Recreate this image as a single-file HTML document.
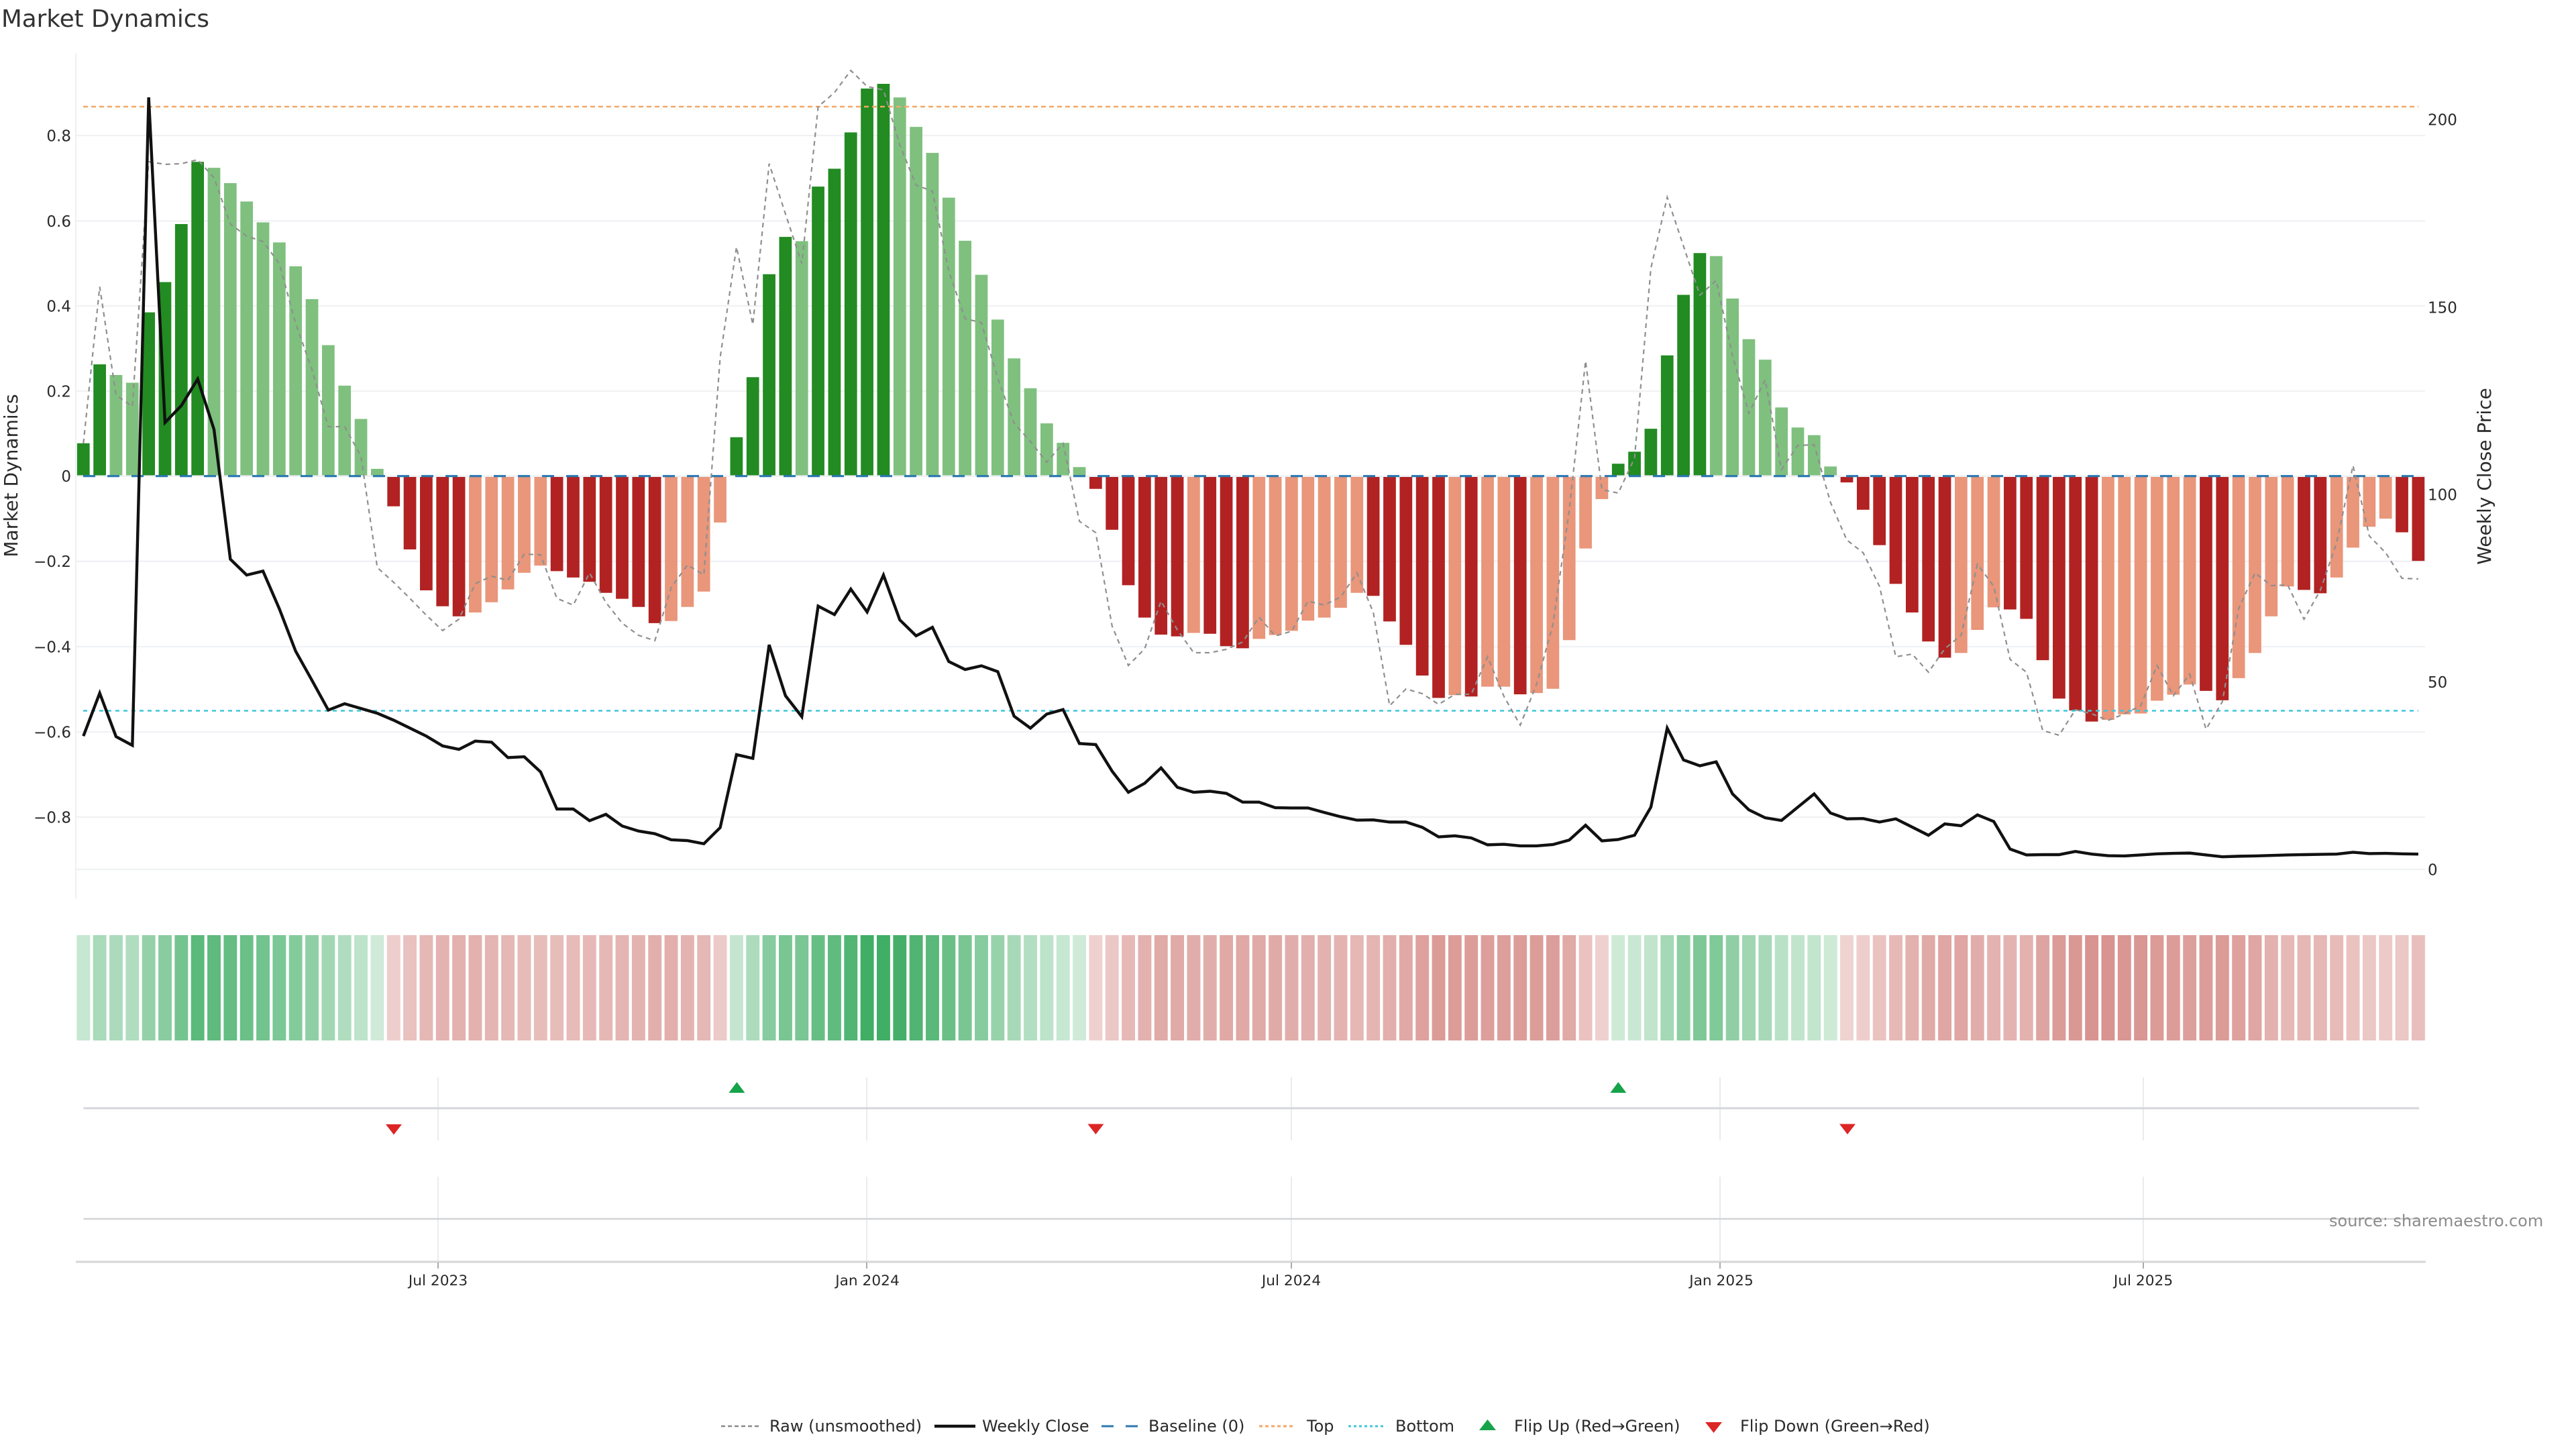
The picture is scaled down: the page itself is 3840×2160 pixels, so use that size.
<!DOCTYPE html>
<html lang="en">
<head>
<meta charset="utf-8">
<title>Market Dynamics</title>
<style>
html,body{margin:0;padding:0;background:#fff;width:3840px;height:2160px;overflow:hidden}
svg{display:block}
text{font-family:"DejaVu Sans","Liberation Sans",sans-serif;fill:#2a2a2a}
.t{font-size:23px}
.h rect{width:.8175px;height:1px}
</style>
</head>
<body>
<svg width="3840" height="2160" viewBox="0 0 3840 2160" xmlns="http://www.w3.org/2000/svg">
<rect width="3840" height="2160" fill="#fff"/>
<text x="2" y="40" font-size="35.7" style="fill:#333">Market Dynamics</text>

<!-- axis + grid -->
<path d="M113 80V1340" stroke="#eef0f3" stroke-width="2" fill="none"/>
<path d="M114 202H3615M114 329.5H3615M114 456H3615M114 583H3615M114 836.8H3615M114 964H3615M114 1091H3615M114 1218H3615M114 1296H3615" stroke="#f0f2f5" stroke-width="2.5" fill="none"/>

<!-- bars -->
<g transform="translate(114.9 709) scale(24.34 -635.5)">
<path fill="#228b22" d="M0 0h.77V.076H0zM1 0h.77V.261H1zM4 0h.77V.383H4zM5 0h.77V.454H5zM6 0h.77V.59H6zM7 0h.77V.736H7zM40 0h.77V.09H40zM41 0h.77V.231H41zM42 0h.77V.4725H42zM43 0h.77V.56H43zM45 0h.77V.678H45zM46 0h.77V.72H46zM47 0h.77V.805H47zM48 0h.77V.908H48zM49 0h.77V.919H49zM94 0h.77V.028H94zM95 0h.77V.056H95zM96 0h.77V.11H96zM97 0h.77V.282H97zM98 0h.77V.424H98zM99 0h.77V.522H99z"/>
<path fill="#7fc07f" d="M2 0h.77V.236H2zM3 0h.77V.218H3zM8 0h.77V.722H8zM9 0h.77V.686H9zM10 0h.77V.643H10zM11 0h.77V.594H11zM12 0h.77V.547H12zM13 0h.77V.491H13zM14 0h.77V.414H14zM15 0h.77V.306H15zM16 0h.77V.211H16zM17 0h.77V.133H17zM18 0h.77V.016H18zM44 0h.77V.55H44zM50 0h.77V.887H50zM51 0h.77V.818H51zM52 0h.77V.757H52zM53 0h.77V.652H53zM54 0h.77V.551H54zM55 0h.77V.471H55zM56 0h.77V.366H56zM57 0h.77V.275H57zM58 0h.77V.205H58zM59 0h.77V.1225H59zM60 0h.77V.077H60zM61 0h.77V.02H61zM100 0h.77V.515H100zM101 0h.77V.4155H101zM102 0h.77V.32H102zM103 0h.77V.272H103zM104 0h.77V.16H104zM105 0h.77V.113H105zM106 0h.77V.095H106zM107 0h.77V.0215H107z"/>
<path fill="#b22222" d="M19 0h.77V-.072H19zM20 0h.77V-.173H20zM21 0h.77V-.269H21zM22 0h.77V-.3065H22zM23 0h.77V-.33H23zM29 0h.77V-.224H29zM30 0h.77V-.239H30zM31 0h.77V-.249H31zM32 0h.77V-.275H32zM33 0h.77V-.289H33zM34 0h.77V-.308H34zM35 0h.77V-.346H35zM62 0h.77V-.031H62zM63 0h.77V-.127H63zM64 0h.77V-.257H64zM65 0h.77V-.333H65zM66 0h.77V-.373H66zM67 0h.77V-.377H67zM69 0h.77V-.371H69zM70 0h.77V-.4H70zM71 0h.77V-.405H71zM79 0h.77V-.282H79zM80 0h.77V-.342H80zM81 0h.77V-.397H81zM82 0h.77V-.469H82zM83 0h.77V-.5215H83zM85 0h.77V-.518H85zM88 0h.77V-.513H88zM108 0h.77V-.016H108zM109 0h.77V-.08H109zM110 0h.77V-.163H110zM111 0h.77V-.254H111zM112 0h.77V-.321H112zM113 0h.77V-.389H113zM114 0h.77V-.427H114zM118 0h.77V-.314H118zM119 0h.77V-.336H119zM120 0h.77V-.433H120zM121 0h.77V-.523H121zM122 0h.77V-.551H122zM123 0h.77V-.577H123zM130 0h.77V-.505H130zM131 0h.77V-.527H131zM136 0h.77V-.268H136zM137 0h.77V-.276H137zM142 0h.77V-.133H142zM143 0h.77V-.2H143z"/>
<path fill="#e9967a" d="M24 0h.77V-.321H24zM25 0h.77V-.297H25zM26 0h.77V-.267H26zM27 0h.77V-.228H27zM28 0h.77V-.211H28zM36 0h.77V-.341H36zM37 0h.77V-.308H37zM38 0h.77V-.272H38zM39 0h.77V-.11H39zM68 0h.77V-.369H68zM72 0h.77V-.383H72zM73 0h.77V-.374H73zM74 0h.77V-.364H74zM75 0h.77V-.34H75zM76 0h.77V-.333H76zM77 0h.77V-.31H77zM78 0h.77V-.275H78zM84 0h.77V-.515H84zM86 0h.77V-.495H86zM87 0h.77V-.495H87zM89 0h.77V-.51H89zM90 0h.77V-.5H90zM91 0h.77V-.386H91zM92 0h.77V-.171H92zM93 0h.77V-.055H93zM115 0h.77V-.416H115zM116 0h.77V-.362H116zM117 0h.77V-.309H117zM124 0h.77V-.573H124zM125 0h.77V-.56H125zM126 0h.77V-.558H126zM127 0h.77V-.528H127zM128 0h.77V-.514H128zM129 0h.77V-.49H129zM132 0h.77V-.475H132zM133 0h.77V-.416H133zM134 0h.77V-.33H134zM135 0h.77V-.26H135zM138 0h.77V-.239H138zM139 0h.77V-.169H139zM140 0h.77V-.12H140zM141 0h.77V-.101H141z"/>
</g>
<path d="M114 709.7H3615" stroke="#eef0f4" stroke-width="2.5" fill="none"/>
<path d="M124 709.7H3605" stroke="#2a78b0" stroke-width="3.2" stroke-dasharray="18 18" fill="none"/>

<!-- threshold lines -->
<path d="M124 159H3605" stroke="#f4a765" stroke-width="2.5" stroke-dasharray="7 5" fill="none"/>
<path d="M124 1059.5H3605" stroke="#3fc6d8" stroke-width="2.6" stroke-dasharray="6 6" fill="none"/>

<!-- raw line -->
<g transform="translate(124.3 0) scale(24.34 1)">
<polyline fill="none" stroke="#8f8f8f" stroke-width="2.2" stroke-dasharray="7 6" vector-effect="non-scaling-stroke" points="0,661 1,427.5 2,589 3,606 4,241 5,245 6,244 7,238 8,265 9,334 10,352 11,360 12,393 13,482 14,551 15,636 16,636 17,680 18,846 19,868 20,892 21,917 22,940 23,923 24,870 25,859 26,865 27,826 28,827 29,892 30,902 31,854 32,898 33,929 34,947 35,955 36,876 37,842 38,857 39,533 40,368 41,484 42,244 43,319 44,393 45,159 46,138 47,105 48,129 49,134 50,216 51,276 52,285 53,404 54,475 55,481 56,564 57,631 58,658 59,689 60,661 61,777 62,794 63,933 64,992 65,967 66,896 67,939 68,973 69,973 70,968 71,957 72,920 73,948 74,941 75,896 76,902 77,890 78,854 79,913 80,1052 81,1027 82,1034 83,1050 84,1035 85,1035 86,979 87,1038 88,1081 89,1020 90,931 91,761 92,538 93,730 94,735 95,683 96,400 97,294 98,367 99,440 100,418 101,530 102,616 103,566 104,700 105,664 106,663 107,749 108,805 109,824 110,874 111,979 112,975 113,1002 114,967 115,947 116,841 117,874 118,983 119,1002 120,1089 121,1096 122,1058 123,1064 124,1074 125,1064 126,1052 127,992 128,1037 129,1005 130,1087 131,1046 132,907 133,854 134,873 135,872 136,923 137,880 138,809 139,694 140,799 141,824 142,862 143,863"/>
</g>

<!-- weekly close -->
<g transform="translate(124.3 690) scale(24.34 .3954)">
<polyline fill="none" stroke="#111" stroke-width="4.4" vector-effect="non-scaling-stroke" points="0,1030 1,868 2,1032 3,1065 4,-1378 5,-152 6,-216 7,-316 8,-126 9,363 10,423 11,408 12,550 13,710 14,820 15,932 16,908 17,926 18,944 19,970 20,1000 21,1030 22,1067 23,1080 24,1049 25,1053 26,1111 27,1108 28,1165 29,1305 30,1305 31,1349 32,1325 33,1369 34,1388 35,1398 36,1421 37,1424 38,1436 39,1375 40,1100 41,1114 42,686 43,878 44,957 45,540 46,572 47,476 48,562 49,423 50,592 51,652 52,620 53,749 54,779 55,765 56,787 57,955 58,1000 59,947 60,930 61,1058 62,1062 63,1162 64,1242 65,1208 66,1150 67,1223 68,1242 69,1238 70,1246 71,1279 72,1279 73,1300 74,1301 75,1301 76,1318 77,1334 78,1347 79,1346 80,1354 81,1354 82,1374 83,1410 84,1406 85,1414 86,1440 87,1438 88,1444 89,1444 90,1439 91,1422 92,1366 93,1425 94,1420 95,1404 96,1298 97,1000 98,1120 99,1142 100,1127 101,1248 102,1308 103,1338 104,1348 105,1298 106,1248 107,1320 108,1342 109,1341 110,1354 111,1342 112,1373 113,1404 114,1361 115,1368 116,1327 117,1352 118,1456 119,1478 120,1477 121,1477 122,1465 123,1475 124,1481 125,1482 126,1478 127,1474 128,1472 129,1471 130,1478 131,1485 132,1483 133,1482 134,1480 135,1478 136,1477 137,1476 138,1475 139,1468 140,1473 141,1472 142,1474 143,1475"/>
</g>

<!-- axis labels -->
<g class="t" text-anchor="end">
<text x="106" y="210.4">0.8</text>
<text x="106" y="337.8">0.6</text>
<text x="106" y="464.4">0.4</text>
<text x="106" y="591.4">0.2</text>
<text x="106" y="718">0</text>
<text x="106" y="845.2">−0.2</text>
<text x="106" y="972.4">−0.4</text>
<text x="106" y="1099.4">−0.6</text>
<text x="106" y="1226.4">−0.8</text>
</g>
<g class="t">
<text x="3619" y="186.4">200</text>
<text x="3619" y="466.6">150</text>
<text x="3619" y="745.4">100</text>
<text x="3619" y="1025">50</text>
<text x="3619" y="1304.4">0</text>
</g>
<text transform="translate(26 709) rotate(-90)" text-anchor="middle" font-size="28">Market Dynamics</text>
<text transform="translate(3713 710) rotate(-90)" text-anchor="middle" font-size="28">Weekly Close Price</text>

<!-- heat strip -->
<g class="h" transform="translate(114.35 1394) scale(24.34 157)">
<g fill="#1c9e48">
<rect x="0" fill-opacity=".25"/><rect x="1" fill-opacity=".38"/><rect x="2" fill-opacity=".37"/><rect x="3" fill-opacity=".35"/><rect x="4" fill-opacity=".47"/><rect x="5" fill-opacity=".52"/><rect x="6" fill-opacity=".61"/><rect x="7" fill-opacity=".72"/><rect x="8" fill-opacity=".71"/><rect x="9" fill-opacity=".68"/><rect x="10" fill-opacity=".65"/><rect x="11" fill-opacity=".62"/><rect x="12" fill-opacity=".58"/><rect x="13" fill-opacity=".54"/><rect x="14" fill-opacity=".49"/><rect x="15" fill-opacity=".41"/><rect x="16" fill-opacity=".35"/><rect x="17" fill-opacity=".29"/><rect x="18" fill-opacity=".21"/>
<rect x="40" fill-opacity=".26"/><rect x="41" fill-opacity=".36"/><rect x="42" fill-opacity=".53"/><rect x="43" fill-opacity=".59"/><rect x="44" fill-opacity=".585"/><rect x="45" fill-opacity=".67"/><rect x="46" fill-opacity=".7"/><rect x="47" fill-opacity=".76"/><rect x="48" fill-opacity=".84"/><rect x="49" fill-opacity=".84"/><rect x="50" fill-opacity=".82"/><rect x="51" fill-opacity=".77"/><rect x="52" fill-opacity=".73"/><rect x="53" fill-opacity=".66"/><rect x="54" fill-opacity=".59"/><rect x="55" fill-opacity=".53"/><rect x="56" fill-opacity=".46"/><rect x="57" fill-opacity=".39"/><rect x="58" fill-opacity=".34"/><rect x="59" fill-opacity=".29"/><rect x="60" fill-opacity=".25"/><rect x="61" fill-opacity=".21"/>
<rect x="94" fill-opacity=".22"/><rect x="95" fill-opacity=".24"/><rect x="96" fill-opacity=".28"/><rect x="97" fill-opacity=".4"/><rect x="98" fill-opacity=".5"/><rect x="99" fill-opacity=".57"/><rect x="100" fill-opacity=".56"/><rect x="101" fill-opacity=".49"/><rect x="102" fill-opacity=".42"/><rect x="103" fill-opacity=".39"/><rect x="104" fill-opacity=".31"/><rect x="105" fill-opacity=".28"/><rect x="106" fill-opacity=".27"/><rect x="107" fill-opacity=".22"/>
</g>
<g fill="#b22a22" opacity=".96">
<rect x="19" fill-opacity=".24"/><rect x="20" fill-opacity=".3"/><rect x="21" fill-opacity=".35"/><rect x="22" fill-opacity=".37"/><rect x="23" fill-opacity=".38"/><rect x="24" fill-opacity=".38"/><rect x="25" fill-opacity=".36"/><rect x="26" fill-opacity=".35"/><rect x="27" fill-opacity=".33"/><rect x="28" fill-opacity=".32"/><rect x="29" fill-opacity=".32"/><rect x="30" fill-opacity=".33"/><rect x="31" fill-opacity=".34"/><rect x="32" fill-opacity=".35"/><rect x="33" fill-opacity=".36"/><rect x="34" fill-opacity=".37"/><rect x="35" fill-opacity=".39"/><rect x="36" fill-opacity=".39"/><rect x="37" fill-opacity=".37"/><rect x="38" fill-opacity=".35"/><rect x="39" fill-opacity=".26"/>
<rect x="62" fill-opacity=".22"/><rect x="63" fill-opacity=".27"/><rect x="64" fill-opacity=".34"/><rect x="65" fill-opacity=".38"/><rect x="66" fill-opacity=".41"/><rect x="67" fill-opacity=".41"/><rect x="68" fill-opacity=".4"/><rect x="69" fill-opacity=".4"/><rect x="70" fill-opacity=".42"/><rect x="71" fill-opacity=".42"/><rect x="72" fill-opacity=".41"/><rect x="73" fill-opacity=".41"/><rect x="74" fill-opacity=".4"/><rect x="75" fill-opacity=".39"/><rect x="76" fill-opacity=".38"/><rect x="77" fill-opacity=".37"/><rect x="78" fill-opacity=".35"/><rect x="79" fill-opacity=".36"/><rect x="80" fill-opacity=".39"/><rect x="81" fill-opacity=".42"/><rect x="82" fill-opacity=".46"/><rect x="83" fill-opacity=".49"/><rect x="84" fill-opacity=".48"/><rect x="85" fill-opacity=".48"/><rect x="86" fill-opacity=".47"/><rect x="87" fill-opacity=".47"/><rect x="88" fill-opacity=".48"/><rect x="89" fill-opacity=".48"/><rect x="90" fill-opacity=".475"/><rect x="91" fill-opacity=".41"/><rect x="92" fill-opacity=".29"/><rect x="93" fill-opacity=".23"/>
<rect x="108" fill-opacity=".21"/><rect x="109" fill-opacity=".24"/><rect x="110" fill-opacity=".29"/><rect x="111" fill-opacity=".34"/><rect x="112" fill-opacity=".38"/><rect x="113" fill-opacity=".41"/><rect x="114" fill-opacity=".43"/><rect x="115" fill-opacity=".43"/><rect x="116" fill-opacity=".4"/><rect x="117" fill-opacity=".37"/><rect x="118" fill-opacity=".37"/><rect x="119" fill-opacity=".38"/><rect x="120" fill-opacity=".44"/><rect x="121" fill-opacity=".49"/><rect x="122" fill-opacity=".5"/><rect x="123" fill-opacity=".52"/><rect x="124" fill-opacity=".52"/><rect x="125" fill-opacity=".51"/><rect x="126" fill-opacity=".51"/><rect x="127" fill-opacity=".49"/><rect x="128" fill-opacity=".48"/><rect x="129" fill-opacity=".47"/><rect x="130" fill-opacity=".48"/><rect x="131" fill-opacity=".49"/><rect x="132" fill-opacity=".46"/><rect x="133" fill-opacity=".43"/><rect x="134" fill-opacity=".38"/><rect x="135" fill-opacity=".34"/><rect x="136" fill-opacity=".35"/><rect x="137" fill-opacity=".35"/><rect x="138" fill-opacity=".33"/><rect x="139" fill-opacity=".29"/><rect x="140" fill-opacity=".27"/><rect x="141" fill-opacity=".26"/><rect x="142" fill-opacity=".27"/><rect x="143" fill-opacity=".31"/>
</g>
</g>

<!-- flip panel -->
<path d="M653 1606V1700M1292 1606V1700M1925 1606V1700M2564 1606V1700M3195 1606V1700M653 1754V1881M1292 1754V1881M1925 1754V1881M2564 1754V1881M3195 1754V1881" stroke="#e9ebef" stroke-width="2" fill="none"/>
<path d="M124.5 1652H3606" stroke="#d4d6da" stroke-width="3" fill="none"/>
<path d="M124.5 1817H3606" stroke="#d2d4d6" stroke-width="2.4" fill="none"/>
<g fill="#16a34a">
<polygon points="1098.4,1613 1110.4,1629 1086.4,1629"/>
<polygon points="2412.3,1613 2424.3,1629 2400.3,1629"/>
</g>
<g fill="#dc2626">
<polygon points="575,1676 599,1676 587,1691.5"/>
<polygon points="1621.4,1675.5 1645.4,1675.5 1633.4,1691"/>
<polygon points="2742,1675.5 2766,1675.5 2754,1691"/>
</g>

<!-- x axis -->
<path d="M113 1881H3616" stroke="#d6d6d6" stroke-width="3" fill="none"/>
<path d="M653 1882V1891M1292 1882V1891M1925 1882V1891M2564 1882V1891M3195 1882V1891" stroke="#aaa" stroke-width="2" fill="none"/>
<g font-size="21.7" text-anchor="middle">
<text x="653" y="1916">Jul 2023</text>
<text x="1293" y="1916">Jan 2024</text>
<text x="1925" y="1916">Jul 2024</text>
<text x="2566" y="1916">Jan 2025</text>
<text x="3195" y="1916">Jul 2025</text>
</g>

<text x="3472" y="1828" font-size="24" style="fill:#8c8c8c">source: sharemaestro.com</text>

<!-- legend -->
<path d="M1075 2126H1131" stroke="#8a8a8a" stroke-width="2.6" stroke-dasharray="6 4" fill="none"/>
<path d="M1393 2126H1454" stroke="#111" stroke-width="4.4" fill="none"/>
<path d="M1642 2126H1697" stroke="#2a78b0" stroke-width="3" stroke-dasharray="18 18" fill="none"/>
<path d="M1877 2126H1930" stroke="#f4a765" stroke-width="3" stroke-dasharray="5 4" fill="none"/>
<path d="M2010 2126H2065" stroke="#3fc6d8" stroke-width="3" stroke-dasharray="4 4" fill="none"/>
<polygon points="2217.5,2116 2230,2132 2205,2132" fill="#16a34a"/>
<polygon points="2542,2120 2567,2120 2554.5,2136" fill="#dc2626"/>
<g font-size="24">
<text x="1147" y="2134">Raw (unsmoothed)</text>
<text x="1464" y="2134">Weekly Close</text>
<text x="1712" y="2134">Baseline (0)</text>
<text x="1948" y="2134">Top</text>
<text x="2080" y="2134">Bottom</text>
<text x="2257" y="2134">Flip Up (Red→Green)</text>
<text x="2594" y="2134">Flip Down (Green→Red)</text>
</g>
</svg>
</body>
</html>
